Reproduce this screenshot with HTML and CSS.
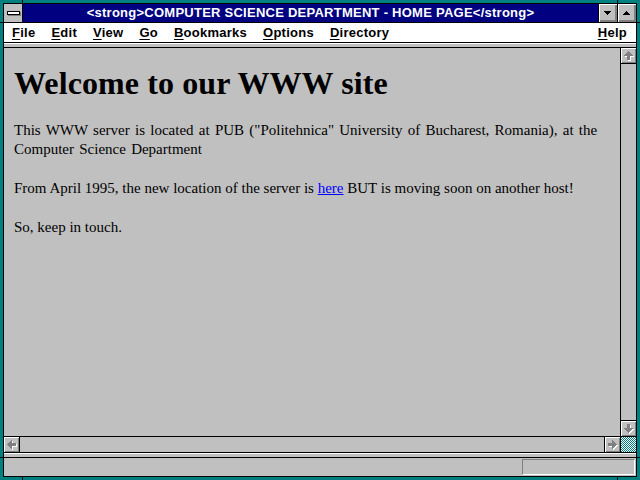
FILE: index.html
```html
<!DOCTYPE html>
<html>
<head>
<meta charset="utf-8">
<title>Netscape</title>
<link rel="stylesheet" href="styles.css">
</head>
<body>
<svg class="defs" width="0" height="0">
  <defs>
    <symbol id="arrow" viewBox="0 0 15 15"><path d="M7 3h1v1H7z M6 4h3v1H6z M5 5h5v1H5z M4 6h7v1H4z M3 7h9v1H3z M6 8h3v4H6z"/></symbol>
  </defs>
</svg>
<div class="win">
  <div class="frame">
    <div class="titlebar">
      <div class="sysbox"><span class="sysbar"></span></div>
      <div class="title">&lt;strong&gt;COMPUTER SCIENCE DEPARTMENT - HOME PAGE&lt;/strong&gt;</div>
      <div class="tbtn">
        <svg width="18" height="18" viewBox="0 0 18 18" shape-rendering="crispEdges"><path d="M5 7h7v1H5z M6 8h5v1H6z M7 9h3v1H7z M8 10h1v1H8z"/></svg>
      </div>
      <div class="tbtn">
        <svg width="18" height="18" viewBox="0 0 18 18" shape-rendering="crispEdges"><path d="M8 7h1v1H8z M7 8h3v1H7z M6 9h5v1H6z M5 10h7v1H5z"/></svg>
      </div>
    </div>
    <div class="menubar">
      <span class="mi"><u>F</u>ile</span>
      <span class="mi"><u>E</u>dit</span>
      <span class="mi"><u>V</u>iew</span>
      <span class="mi"><u>G</u>o</span>
      <span class="mi"><u>B</u>ookmarks</span>
      <span class="mi"><u>O</u>ptions</span>
      <span class="mi"><u>D</u>irectory</span>
      <span class="mi help"><u>H</u>elp</span>
    </div>
    <div class="strip"></div>
    <div class="viewport">
      <div class="page">
        <h1>Welcome to our WWW site</h1>
        <p class="intro">This WWW server is located at PUB ("Politehnica" University of Bucharest, Romania), at the Computer Science Department</p>
        <p>From April 1995, the new location of the server is <a href="#">here</a> BUT is moving soon on another host!</p>
        <p>So, keep in touch.</p>
      </div>
      <div class="vscroll">
        <div class="sbtn top">
          <svg width="15" height="15" viewBox="0 0 15 15" shape-rendering="crispEdges"><g transform="translate(1,1)"><use href="#arrow" class="hl"/></g><use href="#arrow" class="ag"/></svg>
        </div>
        <div class="track"></div>
        <div class="sbtn bottom">
          <svg width="15" height="15" viewBox="0 0 15 15" shape-rendering="crispEdges"><g transform="translate(1,1)"><g transform="rotate(180 7.5 7.5)"><use href="#arrow" class="hl"/></g></g><g transform="rotate(180 7.5 7.5)"><use href="#arrow" class="ag"/></g></svg>
        </div>
      </div>
    </div>
    <div class="hrow">
      <div class="hscroll">
        <div class="sbtn left">
          <svg width="15" height="15" viewBox="0 0 15 15" shape-rendering="crispEdges"><g transform="translate(1,1)"><g transform="rotate(-90 7.5 7.5)"><use href="#arrow" class="hl"/></g></g><g transform="rotate(-90 7.5 7.5)"><use href="#arrow" class="ag"/></g></svg>
        </div>
        <div class="track"></div>
        <div class="sbtn right">
          <svg width="15" height="15" viewBox="0 0 15 15" shape-rendering="crispEdges"><g transform="translate(1,1)"><g transform="rotate(90 7.5 7.5)"><use href="#arrow" class="hl"/></g></g><g transform="rotate(90 7.5 7.5)"><use href="#arrow" class="ag"/></g></svg>
        </div>
      </div>
      <div class="corner"></div>
    </div>
    <div class="strip2"></div>
    <div class="status"><div class="statbox"></div></div>
  </div>
  <span class="notch v tl"></span>
  <span class="notch v tr"></span>
  <span class="notch v bl"></span>
  <span class="notch v br"></span>
  <span class="notch h lt"></span>
  <span class="notch h rt"></span>
  <span class="notch h lb"></span>
  <span class="notch h rb"></span>
</div>
</body>
</html>
```
FILE: styles.css
```css
* { box-sizing: border-box; }
html, body { margin: 0; padding: 0; }
body { width: 640px; height: 480px; overflow: hidden; background: #008080; }
.defs { position: absolute; width: 0; height: 0; }

.win {
  position: relative;
  width: 640px;
  height: 480px;
  background: #008080;
  padding: 3px;
}
.frame {
  height: 100%;
  border: 1px solid #000;
  background: #c0c0c0;
  display: flex;
  flex-direction: column;
}

/* title bar */
.titlebar {
  height: 19px;
  flex: none;
  display: flex;
  background: #000080;
  border-bottom: 1px solid #000;
}
.sysbox {
  width: 19px;
  background: #c0c0c0;
  border-right: 1px solid #000;
  display: flex;
  align-items: center;
  justify-content: center;
}
.sysbar {
  display: block;
  width: 13px;
  height: 4px;
  background: #fff;
  border: 1px solid #000;
  box-shadow: 1px 1px 0 #808080;
  margin-top: -1px;
}
.title {
  flex: 1;
  color: #fff;
  font-family: "Liberation Sans", Arial, sans-serif;
  font-weight: bold;
  font-size: 13px;
  letter-spacing: 0.25px;
  line-height: 18px;
  text-align: center;
  white-space: nowrap;
}
.tbtn {
  width: 19px;
  height: 18px;
  border-left: 1px solid #000;
  background: #c0c0c0;
  box-shadow: inset 1px 1px 0 #fff, inset -1px -1px 0 #808080, inset -2px -2px 0 #808080;
}
.tbtn svg { display: block; }

/* menu bar */
.menubar {
  height: 20px;
  flex: none;
  background: #fff;
  border-bottom: 1px solid #000;
  display: flex;
  align-items: center;
  font-family: "Liberation Sans", Arial, sans-serif;
  font-weight: bold;
  font-size: 13px;
  letter-spacing: 0.25px;
  color: #000;
}
.mi { padding: 0 8px; line-height: 18px; }
.mi.help { margin-left: auto; padding-right: 9px; }
.mi u { text-decoration-thickness: 1px; text-underline-offset: 2px; }

.strip {
  height: 5px;
  flex: none;
  background: #c0c0c0;
  box-shadow: inset 0 1px 0 #fff;
  border-bottom: 1px solid #000;
}

/* viewport */
.viewport {
  flex: 1;
  display: flex;
  border-bottom: 1px solid #000;
  min-height: 0;
}
.page {
  flex: 1;
  padding: 17px 10px 0 10px;
  font-family: "Liberation Serif", "Times New Roman", serif;
  color: #000;
}
.page h1 {
  margin: 0 0 3px 0;
  font-size: 32px;
  line-height: 36px;
  font-weight: bold;
  letter-spacing: 0.1px;
}
.page p {
  margin: 20px 0 0 0;
  font-size: 15px;
  line-height: 19px;
}
.page p.intro { word-spacing: 1.5px; }
.page a { color: #0000ff; text-decoration: underline; }

.vscroll {
  width: 16px;
  border-left: 1px solid #000;
  display: flex;
  flex-direction: column;
}
.track { flex: 1; background: #c0c0c0; }
.sbtn {
  background: #c0c0c0;
  box-shadow: inset 1px 1px 0 #fff, inset -1px -1px 0 #808080;
  flex: none;
}
.sbtn svg { display: block; }
.vscroll .sbtn { height: 16px; }
.sbtn.top { border-bottom: 1px solid #000; }
.sbtn.bottom { border-top: 1px solid #000; }
.hl { fill: #fff; }
.ag { fill: #808080; }

.hrow {
  height: 15px;
  flex: none;
  display: flex;
}
.hscroll { flex: 1; display: flex; }
.hscroll .sbtn { width: 16px; }
.sbtn.left { border-right: 1px solid #000; }
.sbtn.right { border-left: 1px solid #000; }
.corner {
  width: 16px;
  border-left: 1px solid #000;
  background-color: #008080;
  background-image: repeating-conic-gradient(#ffffff 0 25%, transparent 0 50%);
  background-size: 2px 2px;
}

.strip2 {
  height: 6px;
  flex: none;
  background: #c0c0c0;
  border-top: 1px solid #000;
  border-bottom: 1px solid #000;
  box-shadow: inset 0 1px 0 #fff;
}

.status {
  height: 18px;
  flex: none;
  display: flex;
  justify-content: flex-end;
  padding: 1px 1px 1px 0;
}
.statbox {
  width: 113px;
  height: 16px;
  border-top: 1px solid #808080;
  border-left: 1px solid #808080;
  border-bottom: 1px solid #fff;
  border-right: 1px solid #fff;
}

/* sizing-border corner marks */
.notch { position: absolute; background: #000; }
.notch.v { width: 1px; height: 3px; }
.notch.h { width: 3px; height: 1px; }
.notch.tl { left: 22px; top: 0; }
.notch.tr { left: 617px; top: 0; }
.notch.bl { left: 22px; top: 477px; }
.notch.br { left: 617px; top: 477px; }
.notch.lt { left: 0; top: 22px; }
.notch.rt { left: 637px; top: 22px; }
.notch.lb { left: 0; top: 457px; }
.notch.rb { left: 637px; top: 457px; }
```
